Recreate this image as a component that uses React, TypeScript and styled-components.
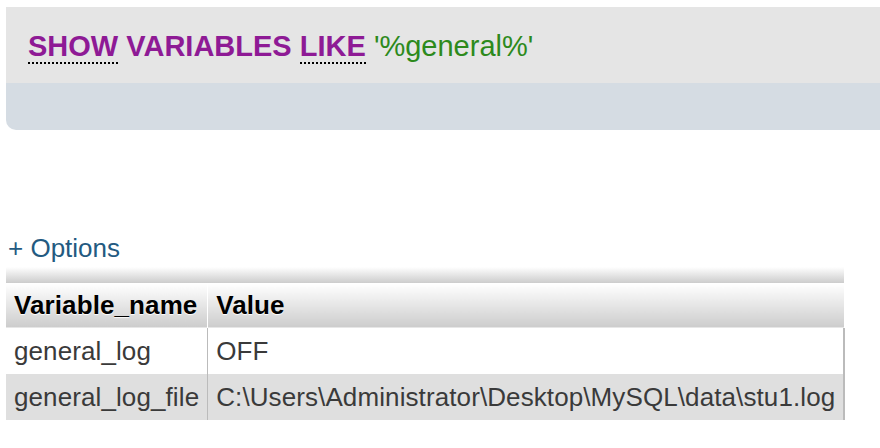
import React from "react";
import styled, { createGlobalStyle } from "styled-components";

const Global = createGlobalStyle`
  html, body { margin: 0; padding: 0; background: #fff; overflow: hidden; }
  body { font-family: "Liberation Sans", Arial, Helvetica, sans-serif; }
`;

const Page = styled.div`
  padding: 7px 0 0 6px;
  width: 880px;
  box-sizing: border-box;
`;

const QueryBox = styled.div`
  margin-right: -20px;
  border-radius: 0 0 0 10px;
  overflow: hidden;
  background: #d5dce3;
`;

const QueryLine = styled.div`
  background: #e5e5e5;
  height: 76px;
  box-sizing: border-box;
  padding: 23px 0 0 22px;
  font-size: 29px;
  line-height: 33px;
  white-space: nowrap;
`;

const Keyword = styled.span<{ $doc?: boolean }>`
  color: #8e1a95;
  font-weight: bold;
  ${(p) => (p.$doc ? "border-bottom: 2px dotted #000; padding-bottom: 0px;" : "")}
`;

const Str = styled.span`
  color: #2d8a1c;
`;

const QueryFoot = styled.div`
  height: 47px;
`;

const OptionsLink = styled.a`
  display: block;
  margin-top: 103px;
  margin-left: 2px;
  color: #235a81;
  font-size: 26px;
  line-height: 30px;
  text-decoration: none;
`;

const Table = styled.table`
  margin-top: 4px;
  border-collapse: collapse;
  width: 839px;
  font-size: 26px;
  letter-spacing: 0.1px;
`;

const TopBand = styled.tr`
  height: 16px;
  border-bottom: 1px solid #fff;
  & > td {
    padding: 0;
    background: linear-gradient(#ffffff, #cccccc);
  }
`;

const Th = styled.th<{ $w?: number }>`
  text-align: left;
  height: 45px;
  padding: 0 8px;
  box-sizing: border-box;
  color: #000;
  font-weight: bold;
  text-shadow: 0 1px 1px #fff;
  background: linear-gradient(#ffffff, #cccccc);
  border-right: 1px solid #fff;
  &:last-child { border-right: none; }
  ${(p) => (p.$w ? `width: ${p.$w}px;` : "")}
`;

const Tr = styled.tr<{ $odd?: boolean }>`
  background: ${(p) => (p.$odd ? "#dfdfdf" : "#ffffff")};
`;

const Td = styled.td`
  height: 46px;
  padding: 0 8px;
  color: #3a3a3a;
  white-space: nowrap;
  border-right: 1px solid #bbb;
  &:last-child { border-right: 2px solid #bbb; }
`;

const rows = [
  ["general_log", "OFF"],
  ["general_log_file", "C:\\Users\\Administrator\\Desktop\\MySQL\\data\\stu1.log"],
];

export default function App() {
  return (
    <>
      <Global />
      <Page>
        <QueryBox>
          <QueryLine>
            <Keyword $doc>SHOW</Keyword> <Keyword>VARIABLES</Keyword>{" "}
            <Keyword $doc>LIKE</Keyword> <Str>'%general%'</Str>
          </QueryLine>
          <QueryFoot />
        </QueryBox>
        <OptionsLink href="#">+ Options</OptionsLink>
        <Table>
          <thead>
            <TopBand>
              <td colSpan={2} />
            </TopBand>
            <tr>
              <Th $w={201}>Variable_name</Th>
              <Th>Value</Th>
            </tr>
          </thead>
          <tbody>
            {rows.map((r, i) => (
              <Tr key={i} $odd={i % 2 === 1}>
                <Td>{r[0]}</Td>
                <Td>{r[1]}</Td>
              </Tr>
            ))}
          </tbody>
        </Table>
      </Page>
    </>
  );
}
